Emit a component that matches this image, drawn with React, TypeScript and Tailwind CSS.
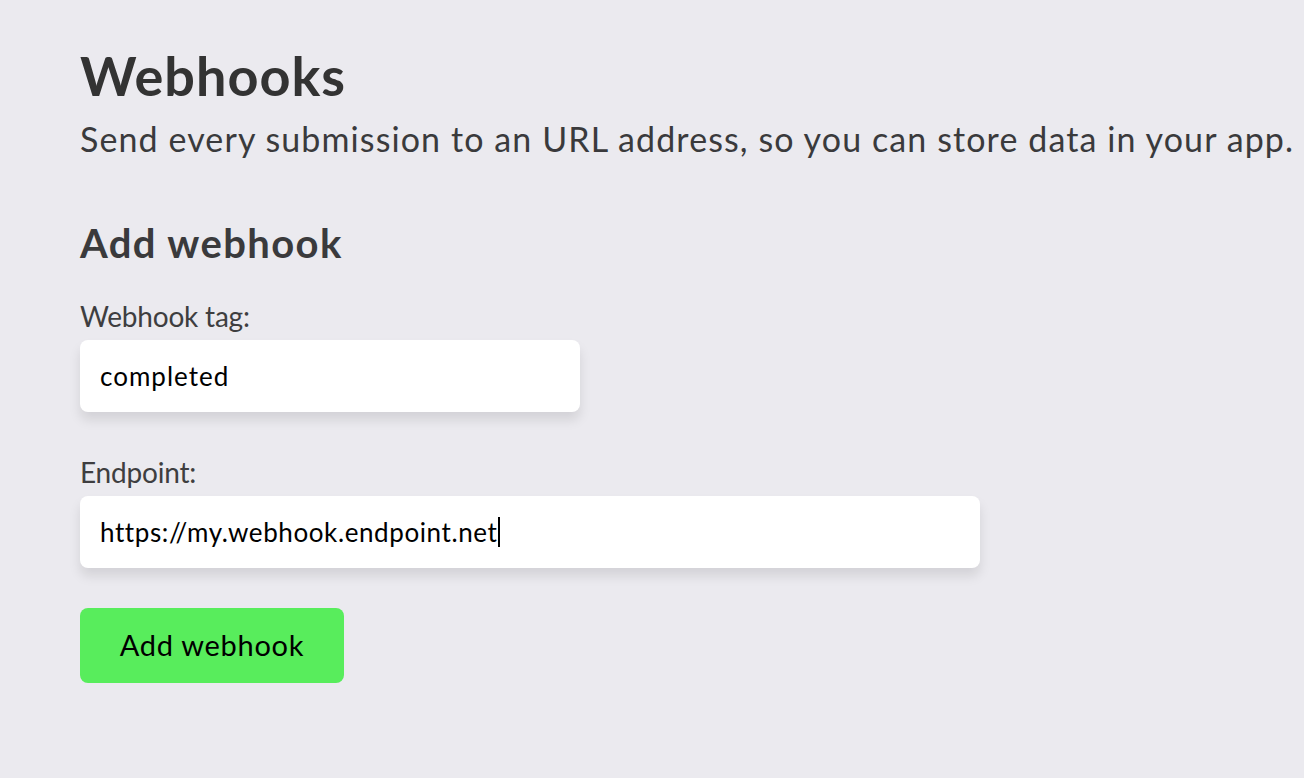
import React from "react";

export default function App() {
  return (
    <div
      className="min-h-[778px] w-full bg-[#ebeaef] text-[#333333]"
      style={{ fontFamily: "Lato, 'Noto Sans', sans-serif" }}
    >
      <div className="pl-[80px] pt-[44px]">
        <h1 className="text-[54px] font-bold leading-[64px] tracking-[1px] text-[#333333]">Webhooks</h1>
        <p className="mt-[11px] text-[34px] leading-[40px] tracking-[1.1px] text-[#3a3a3c] whitespace-nowrap">
          Send every submission to an URL address, so you can store data in your app.
        </p>
        <h2 className="mt-[60px] text-[40px] font-bold leading-[48px] tracking-[1.4px] text-[#3a3a3c]">Add webhook</h2>
        <label className="mt-[33px] block text-[28px] leading-[32px] tracking-[-0.2px] text-[#3e3e40]">Webhook tag:</label>
        <div className="mt-[8px] flex h-[72px] w-[500px] items-center rounded-[8px] bg-white px-[20px] text-[26px] tracking-[1px] text-black shadow-[0_8px_12px_rgba(0,0,0,0.1)]">
          completed
        </div>
        <label className="mt-[44px] block text-[28px] leading-[32px] tracking-[-0.2px] text-[#3e3e40]">Endpoint:</label>
        <div className="mt-[8px] flex h-[72px] w-[900px] items-center rounded-[8px] bg-white px-[20px] text-[26px] tracking-[0.6px] text-black shadow-[0_8px_12px_rgba(0,0,0,0.1)]">
          https://my.webhook.endpoint.net
          <span className="ml-[1px] inline-block h-[30px] w-[2px] bg-black" />
        </div>
        <button className="mt-[40px] flex h-[75px] w-[264px] items-center justify-center rounded-[8px] bg-[#58ed5c] pb-[2px] text-[29px] tracking-[0.7px] text-black">
          Add webhook
        </button>
      </div>
    </div>
  );
}
